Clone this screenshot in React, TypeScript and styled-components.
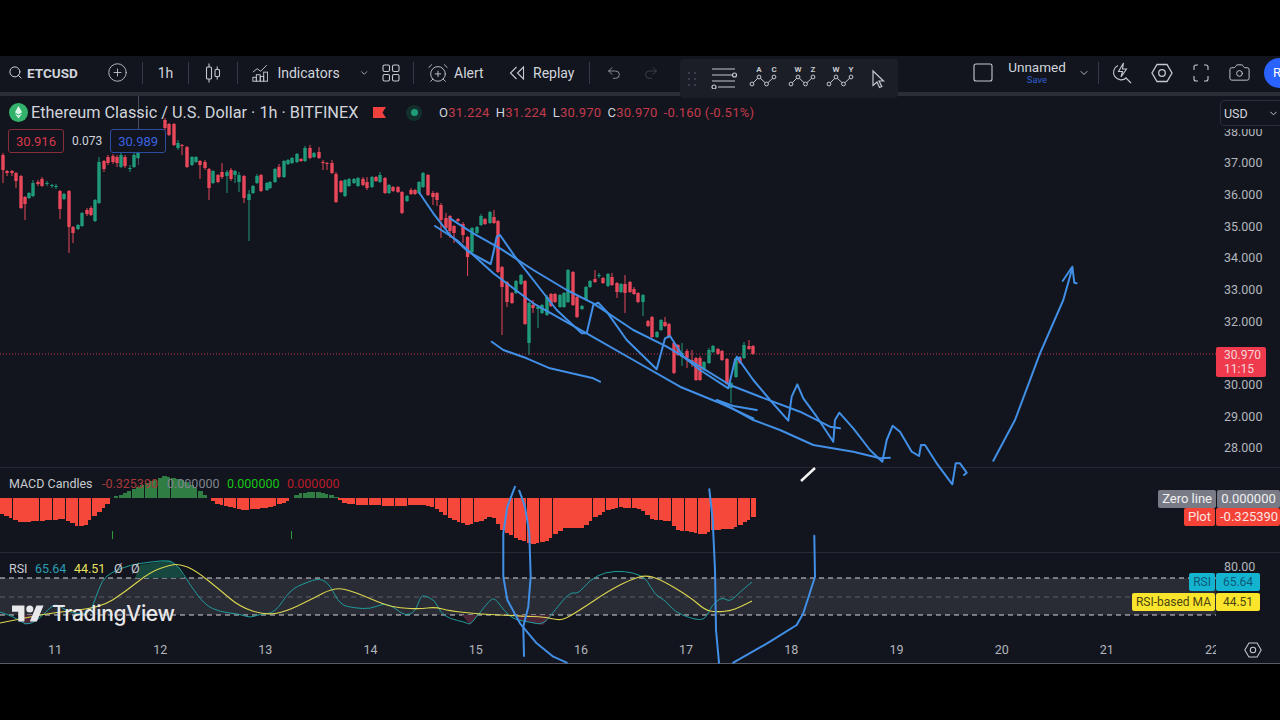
import React from "react";
import styled, { createGlobalStyle } from "styled-components";
import { AlarmClockPlus, Camera, ChevronDown, CirclePlus, Redo2, Search, Undo2 } from "lucide-react";

const GlobalStyle = createGlobalStyle`
  html, body {
    margin: 0;
    height: 100%;
    background: #000;
    overflow: hidden;
    font-family: Roboto, "Liberation Sans", sans-serif;
  }
  * { box-sizing: border-box; }
`;

const BG = "#12151d";
const GREEN = "#1f9b7c";
const RED = "#e8485a";
const BLUE = "#418fe6";

type Pt = [number, number];

const Frame = styled.div`
  width: 1280px;
  height: 720px;
  display: flex;
  flex-direction: column;
  background: #000;
  overflow: hidden;
`;
const Letterbox = styled.div`
  height: 56px;
  flex: none;
`;
const Toolbar = styled.header`
  position: relative;
  height: 36px;
  padding-bottom: 3px;
  flex: none;
  display: flex;
  align-items: center;
  background: ${BG};
  color: #d1d4dc;
  font-size: 14px;
`;
const Symbol = styled.div`
  width: 92px;
  padding-left: 8px;
  display: flex;
  align-items: center;
  gap: 4px;
  font-weight: 700;
  font-size: 13.5px;
`;
const Cell = styled.div<{ $w: number }>`
  width: ${({ $w }) => $w}px;
  flex: none;
  display: flex;
  align-items: center;
  justify-content: center;
`;
const LabelCell = styled.div<{ $w: number; $pad: number; $gap: number }>`
  width: ${({ $w }) => $w}px;
  padding-left: ${({ $pad }) => $pad}px;
  flex: none;
  display: flex;
  align-items: center;
  gap: ${({ $gap }) => $gap}px;
`;
const Sep = styled.div`
  width: 1px;
  height: 22px;
  flex: none;
  background: #363a45;
`;
const RightGroup = styled.div`
  margin-left: auto;
  margin-right: -14px;
  flex: none;
  display: flex;
  align-items: center;
`;
const NameBlock = styled.div`
  width: 74px;
  display: flex;
  flex-direction: column;
  align-items: center;
  line-height: 14px;
  font-size: 13.5px;
`;
const SaveText = styled.span`
  margin-top: 1px;
  color: #2f5fd0;
  font-size: 9.5px;
  line-height: 10px;
`;
const Avatar = styled.div`
  width: 30px;
  height: 30px;
  margin-left: 5px;
  padding-left: 9px;
  border-radius: 50%;
  background: #2962ff;
  color: #fff;
  font-size: 13px;
  line-height: 30px;
`;
const Palette = styled.div`
  position: absolute;
  z-index: 3;
  left: 680px;
  top: 3px;
  width: 218px;
  height: 39px;
  padding: 4px 0 0 8px;
  display: flex;
  align-items: flex-start;
  background: #1b1e27;
  border-radius: 4px;
`;
const DragHandle = styled.div`
  width: 8px;
  height: 14px;
  margin: 9px 14px 0 0;
  display: grid;
  grid-template-columns: 2px 2px;
  grid-auto-rows: 2px;
  gap: 4px;
  & > i { background: #3a3e49; }
`;
const PaletteTool = styled.div<{ $w: number }>`
  width: ${({ $w }) => $w}px;
  flex: none;
  display: flex;
  & > svg { display: block; }
`;
const Rule = styled.div`
  height: 4px;
  flex: none;
  background: #2b2e37;
`;
const Workspace = styled.main`
  position: relative;
  flex: none;
  display: flex;
  flex-direction: column;
  height: 568px;
  background: ${BG};
`;
const Pane = styled.section<{ $h: number; $open?: boolean }>`
  position: relative;
  height: ${({ $h }) => $h}px;
  flex: none;
  display: flex;
  border-bottom: ${({ $open }) => ($open ? "none" : "1px solid #262a34")};
`;
const Plot = styled.div`
  width: 1216px;
  flex: none;
  overflow: hidden;
  & > svg { display: block; }
`;
const PriceAxis = styled.div`
  flex: 1;
  padding: 19.6px 0 0 8px;
  color: #b2b5be;
  font-size: 12.5px;
`;
const AxisRow = styled.div`
  height: 31.7px;
  line-height: 31.7px;
`;
const AxisNote = styled.div`
  flex: 1;
  padding: 6px 0 0 8px;
  color: #b2b5be;
  font-size: 12.5px;
  line-height: 16px;
`;
const UsdBox = styled.div`
  position: absolute;
  top: 4px;
  left: 1220px;
  width: 70px;
  height: 26px;
  padding-left: 3px;
  display: flex;
  align-items: center;
  gap: 20px;
  background: ${BG};
  border: 1px solid #2a2e39;
  border-radius: 4px;
  box-shadow: 0 3px 0 ${BG};
  color: #d1d4dc;
  font-size: 12.5px;
`;
const LastPrice = styled.div`
  position: absolute;
  top: 251px;
  left: 1216px;
  width: 50px;
  height: 30px;
  padding: 1px 0 0 8px;
  background: #ee3a4c;
  border-radius: 2px;
  color: #f5d5d8;
  font-size: 12px;
  line-height: 14px;
`;
const Legend = styled.div`
  position: absolute;
  z-index: 1;
  top: 0;
  left: 0;
  display: flex;
  flex-direction: column;
`;
const TitleRow = styled.div`
  height: 33px;
  padding-left: 9px;
  display: flex;
  align-items: center;
`;
const ChartTitle = styled.span`
  margin-left: 3px;
  width: 342px;
  color: #d1d4dc;
  font-size: 16.3px;
  white-space: nowrap;
`;
const LiveDot = styled.span`
  width: 16px;
  height: 16px;
  margin: 0 17px 0 20px;
  border-radius: 50%;
  background: #12302c;
  display: flex;
  align-items: center;
  justify-content: center;
  &::after {
    content: "";
    width: 7px;
    height: 7px;
    border-radius: 50%;
    background: #1f9b7c;
  }
`;
const Ohlc = styled.div`
  display: flex;
  gap: 6px;
  font-size: 13px;
  letter-spacing: 0.25px;
  color: #c23a4c;
  white-space: nowrap;
  & b {
    font-weight: 400;
    color: #d1d4dc;
  }
`;
const QuoteRow = styled.div`
  padding-left: 8px;
  display: flex;
  align-items: center;
  gap: 8px;
  font-size: 13px;
`;
const QuoteBox = styled.div<{ $tone: string; $line: string }>`
  width: 56px;
  height: 24px;
  display: flex;
  align-items: center;
  justify-content: center;
  background: ${BG};
  color: ${({ $tone }) => $tone};
  border: 1px solid ${({ $line }) => $line};
  border-radius: 3px;
`;
const Spread = styled.span`
  color: #d1d4dc;
  font-size: 12px;
`;
const PaneLegend = styled.div<{ $top: number }>`
  position: absolute;
  z-index: 1;
  top: ${({ $top }) => $top}px;
  left: 9px;
  display: flex;
  align-items: center;
  font-size: 12.5px;
  color: #c8cad0;
  white-space: nowrap;
`;
const LegendValue = styled.span<{ $c: string; $w: number }>`
  color: ${({ $c }) => $c};
  width: ${({ $w }) => $w}px;
`;
const TagStack = styled.div<{ $top: number; $right: number; $gap: number }>`
  position: absolute;
  z-index: 1;
  top: ${({ $top }) => $top}px;
  right: ${({ $right }) => $right}px;
  display: flex;
  flex-direction: column;
  align-items: flex-end;
  gap: ${({ $gap }) => $gap}px;
`;
const TagRow = styled.div<{ $size: number }>`
  display: flex;
  gap: 1px;
  height: 18px;
  font-size: ${({ $size }) => $size}px;
  line-height: 18px;
`;
const Tag = styled.span<{ $bg: string; $c: string; $w?: number }>`
  background: ${({ $bg }) => $bg};
  color: ${({ $c }) => $c};
  ${({ $w }) => ($w ? `width: ${$w}px;` : "")}
  padding: 0 4px;
  border-radius: 2px;
  text-align: center;
  white-space: nowrap;
  overflow: hidden;
`;
const Watermark = styled.div`
  position: absolute;
  z-index: 1;
  left: 12px;
  top: 48px;
  display: flex;
  align-items: center;
  gap: 8px;
  color: #e8e8ea;
  font-family: Inter, Roboto, sans-serif;
  font-size: 21px;
  font-weight: 500;
  letter-spacing: -0.3px;
`;
const TimeAxis = styled.footer`
  height: 30px;
  padding-top: 1px;
  flex: none;
  display: flex;
  align-items: center;
  border-bottom: 1px solid #5a5d66;
`;
const TimeTrack = styled.div`
  width: 1216px;
  flex: none;
  overflow: hidden;
  padding-left: 2.4px;
  display: grid;
  grid-template-columns: repeat(12, 105.2px);
  color: #b2b5be;
  font-size: 12.5px;
  text-align: center;
`;
const AxisSettings = styled.div`
  flex: 1;
  display: flex;
  justify-content: center;
  padding: 2px 0 0 10px;
`;
const Strokes = styled.svg`
  position: absolute;
  z-index: 2;
  top: 0;
  left: 0;
  pointer-events: none;
`;

// tool icons
const iconProps = { fill: "none", stroke: "#c5c8cf", strokeWidth: 1.1 } as const;
const CandleIcon = () => (
  <svg width="16" height="20" viewBox="0 0 16 20" {...iconProps}>
    <rect x="1.5" y="4" width="5" height="12" rx="1" />
    <path d="M4 0.5V4M4 16v3.5" />
    <rect x="10" y="6.5" width="4.5" height="7" rx="1" />
    <path d="M12.2 3.5v3M12.2 13.5v3" />
  </svg>
);
const IndicatorsIcon = () => (
  <svg width="19" height="20" viewBox="0 0 19 20" {...iconProps}>
    <path d="M1 9l5-4 4 3 7-7" />
    <rect x="1" y="15" width="4" height="4.5" />
    <rect x="5" y="12" width="4.5" height="7.5" />
    <rect x="9.5" y="14" width="4" height="5.5" />
    <rect x="13.5" y="9" width="4.5" height="10.5" />
  </svg>
);
const GridIcon = () => (
  <svg width="18" height="18" viewBox="0 0 18 18" {...iconProps}>
    <rect x="1" y="1" width="6.5" height="6.5" rx="1.5" />
    <rect x="10.5" y="1" width="6.5" height="6.5" rx="1.5" />
    <rect x="1" y="10.5" width="6.5" height="6.5" rx="1.5" />
    <rect x="10.5" y="10.5" width="6.5" height="6.5" rx="1.5" />
  </svg>
);
const ReplayIcon = () => (
  <svg width="16" height="14" viewBox="0 0 16 14" {...iconProps}>
    <path d="M7.5 1L1.5 7l6 6M14.5 1l-6 6 6 6V1z" />
  </svg>
);
const SquareIcon = () => (
  <svg width="20" height="19" viewBox="0 0 20 19" {...iconProps}>
    <rect x="1" y="1" width="18" height="17" rx="2" />
  </svg>
);
const BoltLensIcon = () => (
  <svg width="20" height="22" viewBox="0 0 20 22" {...iconProps}>
    <path d="M6 3.5a7.5 7.5 0 1 0 8.5 12M14 16l5 5" />
    <path d="M11.5 1L6.5 9.5h4L9 15l5.5-8h-4z" />
  </svg>
);
const HexIcon = ({ size = 22 }: { size?: number }) => (
  <svg width={size} height={size} viewBox="0 0 22 22" {...iconProps}>
    <path d="M6 2.5h10l5 8.5-5 8.5H6L1 11z" strokeWidth={1.3} />
    <circle cx="11" cy="11" r="3.3" strokeWidth={1.3} />
  </svg>
);
const FullscreenIcon = () => (
  <svg width="16" height="18" viewBox="0 0 16 18" {...iconProps}>
    <path d="M1 6V3a2 2 0 0 1 2-2h2M11 1h2a2 2 0 0 1 2 2v3M15 12v3a2 2 0 0 1-2 2h-2M5 17H3a2 2 0 0 1-2-2v-3" />
  </svg>
);
const LinesIcon = () => (
  <svg width="28" height="26" viewBox="0 0 28 26" fill="none" stroke="#c5c8cf" strokeWidth="1.1">
    <path d="M2 6h23M2 12h21M2 18h23M8 24h17" />
    <circle cx="24.5" cy="12" r="2" fill="#1b1e27" strokeWidth="1.2" />
    <circle cx="4" cy="24" r="2" fill="#1b1e27" strokeWidth="1.2" />
  </svg>
);
const WaveIcon = ({ left, right }: { left: string; right: string }) => (
  <svg width="28" height="26" viewBox="0 0 28 26" fill="none">
    <text x="10" y="8.5" fontSize="8" fontWeight="700" fill="#c5c8cf" textAnchor="middle" fontFamily="Roboto">{left}</text>
    <text x="25" y="8.5" fontSize="8" fontWeight="700" fill="#c5c8cf" textAnchor="middle" fontFamily="Roboto">{right}</text>
    <path d="M3 21l7-7 7.5 7 7.5-7" stroke="#c5c8cf" strokeWidth="1" />
    {([[3, 21], [10, 14], [17.5, 21], [25, 14]] as Pt[]).map(([x, y]) => (
      <circle key={x} cx={x} cy={y} r="1.9" fill="#1b1e27" stroke="#c5c8cf" strokeWidth="1" />
    ))}
  </svg>
);
const CursorIcon = () => (
  <svg width="14" height="26" viewBox="0 0 14 26" {...iconProps}>
    <path d="M2 8l10.5 10H8l2.8 5.5-2.3 1L6 19l-4 3.5z" strokeWidth={1.2} />
  </svg>
);
const CoinIcon = () => (
  <svg width="19" height="19" viewBox="0 0 19 19">
    <circle cx="9.5" cy="9.5" r="9.5" fill="#33b26b" />
    <path d="M9.5 3l3.6 6.3-3.6 2.2-3.6-2.2z" fill="#dff5e8" />
    <path d="M5.9 10.4l3.6 2.2 3.6-2.2-3.6 5.1z" fill="#dff5e8" />
  </svg>
);
const FlagIcon = () => (
  <svg width="13" height="11" viewBox="0 0 13 11" style={{ flex: "none" }}>
    <path d="M0 0h13l-3.5 5.5L13 11H0z" fill="#f0413f" />
  </svg>
);
const TvLogo = () => (
  <svg width="32" height="21" viewBox="0 2 36 22" fill="#e8e8ea">
    <path d="M14 22H7V11H0V4h14v18zM28 22h-8l7.5-18h8L28 22z" />
    <circle cx="20" cy="8" r="4" />
  </svg>
);

// data
const lerp = (keys: Pt[], x: number) => {
  if (x <= keys[0][0]) return keys[0][1];
  for (let i = 1; i < keys.length; i++) {
    if (x <= keys[i][0]) {
      const [x0, y0] = keys[i - 1];
      const [x1, y1] = keys[i];
      return y0 + ((y1 - y0) * (x - x0)) / (x1 - x0);
    }
  }
  return keys[keys.length - 1][1];
};

// x, body top, body bottom, up?, high, low (pixels, read off the zoomed crops)
type Candle = [number, number, number, 0 | 1, number?, number?];
const candles: Candle[] = [
  [3, 155, 170, 0, 153, 183], [7, 171, 173, 0, 170, 176], [12, 171, 173, 0, 170, 176], [16, 173, 181, 0, 172, 188],
  [21, 176, 208, 0, 175, 209], [25, 197, 204, 0, 196, 220], [29, 193, 198, 1], [33, 183, 196, 1, 180, 197],
  [38, 182, 184, 0, 180, 186], [42, 179, 186, 0, 177, 187], [47, 183, 184, 1, 181, 186], [52, 185, 186, 1, 184, 188],
  [56, 186, 187, 1, 184, 189], [60, 191, 209, 0, 190, 219], [64, 194, 199, 1], [69, 191, 227, 0, 190, 253],
  [73, 227, 233, 0, 226, 243], [78, 225, 229, 1], [82, 213, 226, 1], [87, 210, 214, 0, 208, 216], [91, 208, 215, 0, 206, 216],
  [95, 200, 221, 1], [99, 162, 203, 1, 157, 204], [104, 161, 169, 0, 160, 172], [108, 157, 163, 0, 155, 165],
  [113, 156, 162, 0, 154, 164], [117, 157, 163, 0, 155, 167], [121, 155, 167, 1, 152, 168], [125, 157, 166, 0, 155, 168],
  [130, 168, 169, 1, 165, 172], [134, 155, 167, 1, 152, 168], [138, 150, 158, 1], [165, 120, 128, 0, 118, 130],
  [169, 124, 135, 0], [174, 124, 145, 0], [178, 143, 148, 1, 140, 150], [182, 145, 146, 0, 144, 155], [187, 147, 167, 0],
  [192, 157, 165, 1], [196, 157, 162, 1], [200, 161, 165, 0, 160, 179], [205, 162, 168, 0, 160, 170], [209, 169, 188, 0, 168, 200],
  [213, 171, 183, 1], [218, 175, 182, 0], [222, 172, 177, 0, 163, 179], [227, 172, 176, 1, 170, 193], [231, 170, 179, 0, 168, 181],
  [235, 171, 175, 1, 170, 183], [239, 175, 182, 1, 172, 192], [244, 176, 198, 0, 175, 203], [249, 194, 200, 1, 190, 241],
  [253, 186, 193, 1], [257, 176, 183, 1, 174, 184], [261, 175, 191, 0], [267, 183, 190, 1], [270, 182, 188, 1],
  [275, 169, 182, 1], [279, 167, 177, 0, 164, 178], [284, 161, 177, 1], [288, 160, 164, 1], [292, 158, 163, 1],
  [297, 154, 162, 1], [301, 159, 161, 0], [305, 148, 161, 1, 146, 162], [310, 148, 158, 0, 145, 159], [314, 153, 157, 1],
  [319, 152, 158, 0, 147, 159], [323, 162, 163, 0, 160, 170], [327, 163, 164, 0, 162, 170], [332, 163, 173, 0, 160, 174],
  [336, 174, 202, 0, 172, 203], [341, 181, 192, 0], [345, 180, 196, 1, 179, 197], [349, 179, 186, 1], [354, 179, 183, 1],
  [358, 178, 186, 1], [363, 179, 185, 0, 177, 186], [367, 182, 188, 0, 177, 190], [372, 177, 187, 1, 176, 188],
  [376, 177, 181, 0], [380, 175, 182, 1, 172, 183], [385, 178, 193, 0], [389, 185, 193, 1], [393, 187, 191, 0],
  [398, 187, 192, 0, 186, 193], [402, 192, 213, 0], [407, 196, 201, 1], [411, 190, 194, 0, 188, 195], [415, 190, 194, 0],
  [419, 182, 193, 1], [423, 173, 187, 1], [428, 175, 195, 0], [433, 193, 197, 0, 191, 205], [437, 193, 200, 0, 192, 206],
  [441, 205, 220, 0, 203, 238], [446, 218, 228, 0, 213, 230], [450, 216, 231, 0, 215, 238], [454, 226, 233, 0, 225, 243],
  [458, 219, 221, 0], [463, 224, 235, 0, 222, 243], [467.6, 237, 257, 0, 236, 276], [472, 228, 252, 1, 227, 253],
  [477, 227, 233, 1], [481, 216, 225, 1, 214, 226], [485, 219, 224, 0], [490, 212, 223, 1], [494, 217, 223, 0, 210, 224],
  [498, 221, 272, 0], [502, 267, 287, 0, 266, 335], [507, 282, 302, 0, 281, 307], [512, 293, 303, 0], [516, 281, 293, 1],
  [521, 275, 284, 1], [525, 281, 324, 0], [529, 303, 343, 1, 302, 355], [533, 305, 308, 0, 300, 313], [538, 307, 309, 1, 306, 328],
  [542, 305, 313, 1], [547, 297, 315, 1, 295, 316], [551, 294, 306, 0], [555, 294, 302, 0], [560, 295, 307, 1], [564, 293, 307, 1],
  [568, 270, 302, 1], [573, 272, 305, 0], [577, 297, 317, 0], [582, 306, 309, 1], [586, 287, 300, 1], [590, 281, 287, 1],
  [595, 279, 282, 0, 270, 283], [599, 275, 276, 1, 273, 278], [603, 278, 283, 0], [608, 274, 286, 1], [612, 277, 285, 0, 273, 286],
  [617, 283, 292, 0, 282, 298], [621, 284, 292, 1], [625, 284, 293, 0, 275, 313], [630, 282, 292, 0], [634, 289, 294, 0, 287, 295],
  [638, 293, 302, 0], [643, 295, 302, 1, 294, 316], [648, 321, 326, 0], [652, 317, 337, 0], [657, 332, 337, 1], [661, 320, 330, 1],
  [665, 322, 326, 0, 317, 327], [669, 324, 337, 0], [674, 343, 373, 0], [678, 345, 355, 0], [682, 353, 357, 1, 343, 366],
  [687, 351, 358, 0, 349, 368], [692, 360, 363, 0, 350, 367], [696, 358, 380, 0], [700, 358, 380, 0, 356, 381], [704, 362, 370, 1],
  [709, 350, 363, 1, 348, 364], [713, 346, 352, 1], [718, 349, 354, 0], [722, 351, 360, 0], [727, 359, 384, 0], [731, 383, 388, 1, 382, 403],
  [736, 358, 377, 1], [740, 358, 363, 0], [744, 345, 358, 1, 342, 359], [749, 346, 349, 0, 340, 350], [753, 346, 354, 0],
];

const macdKeys: Pt[] = [
  [0, 15], [20, 24], [25, 24], [50, 22], [65, 21], [78, 29], [85, 27], [97, 15], [108, 5], [112, 0],
  [120, -3], [130, -7], [150, -16], [165, -22], [185, -17], [195, -10], [207, -1], [210, 2], [220, 7], [235, 10],
  [245, 12], [265, 10], [280, 6], [290, 2], [293, -2], [300, -5], [315, -6], [330, -4], [337, 0], [345, 5],
  [360, 7], [400, 8], [420, 7], [430, 8], [440, 13], [450, 20], [467, 27], [480, 23], [492, 18], [503, 33],
  [520, 42], [533, 46], [547, 43], [563, 30], [583, 30], [593, 20], [610, 11], [620, 9], [640, 11], [653, 22],
  [670, 23], [677, 32], [687, 33], [703, 37], [713, 32], [730, 31], [743, 25], [754, 18],
];
const macdBars = Array.from({ length: 172 }, (_, i) => {
  const x = i * 4.39;
  return { x, i, v: Math.round(lerp(macdKeys, x + 2)) };
});

const rsiLine: Pt[] = [
  [0, 612], [15, 617], [25, 625], [35, 622], [45, 613], [55, 603], [65, 610], [80, 615], [90, 612], [95, 600],
  [102, 580], [112, 572], [130, 565], [150, 562], [170, 560], [180, 568], [190, 585], [205, 605], [220, 612], [240, 614],
  [250, 618], [260, 614], [275, 613], [290, 590], [305, 583], [320, 578], [330, 585], [340, 605], [355, 608], [370, 609],
  [385, 603], [395, 608], [405, 616], [415, 612], [420, 598], [423, 595], [435, 600], [440, 612], [450, 619], [465, 622],
  [470, 625], [478, 615], [490, 600], [495, 598], [505, 612], [515, 620], [530, 622], [543, 625], [555, 610], [570, 592],
  [578, 594], [590, 580], [605, 572], [625, 571], [640, 575], [647, 580], [655, 595], [665, 600], [675, 612], [690, 618],
  [700, 620], [706, 618], [712, 605], [722, 597], [730, 602], [740, 592], [752, 582],
];
const maLine: Pt[] = [
  [0, 623], [15, 620], [50, 613], [100, 608], [125, 592], [150, 572], [170, 565], [180, 564], [195, 570], [220, 590],
  [240, 607], [265, 615], [285, 612], [310, 600], [335, 587], [355, 592], [385, 605], [400, 608], [420, 609], [435, 607],
  [450, 611], [480, 614], [520, 616], [545, 617], [557, 620], [565, 619], [580, 610], [610, 590], [630, 580], [645, 575],
  [660, 579], [690, 597], [705, 610], [715, 612], [730, 611], [740, 607], [752, 601],
];

const smooth = (pts: Pt[]) => {
  let d = `M${pts[0][0]} ${pts[0][1]}`;
  for (let i = 1; i < pts.length - 1; i++) {
    const mx = (pts[i][0] + pts[i + 1][0]) / 2;
    const my = (pts[i][1] + pts[i + 1][1]) / 2;
    d += ` Q${pts[i][0]} ${pts[i][1]} ${mx} ${my}`;
  }
  const last = pts[pts.length - 1];
  return `${d} L${last[0]} ${last[1]}`;
};

// pen strokes, read off the zoomed crops
const from = (ox: number, oy: number, pts: Pt[]) =>
  pts.map(([x, y]) => `${(ox + x / 3).toFixed(1)},${(oy + y / 3).toFixed(1)}`).join(" ");

const penLines = [
  from(400, 170, [[58, 68], [100, 130], [150, 195], [205, 245], [272, 282], [282, 240], [290, 200], [300, 195], [345, 260], [400, 330], [470, 420], [545, 490], [560, 490], [580, 405], [595, 398], [620, 425], [680, 510], [770, 598], [795, 505], [810, 498], [850, 560], [900, 600], [985, 655], [1005, 570], [1020, 562]]),
  from(720, 250, [[50, 320], [100, 390], [150, 450], [205, 512], [215, 440], [232, 403], [250, 445], [290, 500], [340, 575], [345, 510], [358, 488], [400, 535], [450, 600], [487, 635], [500, 570], [518, 527], [540, 545], [575, 605], [597, 618], [603, 585], [615, 585], [650, 640], [697, 703], [707, 640], [720, 640], [740, 668], [732, 675]]),
  from(400, 170, [[150, 145], [220, 190], [300, 235], [400, 300], [500, 360], [580, 400], [700, 480], [800, 530], [900, 590], [990, 645], [1080, 680], [1200, 725], [1290, 770], [1320, 775]]),
  from(400, 170, [[105, 168], [170, 210], [280, 310], [400, 400], [560, 490], [700, 570], [840, 650], [950, 695], [1060, 745]]),
  from(720, 250, [[0, 455], [100, 510], [180, 540], [280, 585], [400, 605], [480, 625], [510, 623]]),
  from(400, 170, [[950, 690], [1000, 708], [1070, 720]]),
  from(400, 170, [[275, 515], [310, 540], [380, 565], [450, 595], [580, 625], [600, 635]]),
  from(720, 250, [[820, 632], [885, 510], [960, 310], [1030, 150], [1057, 55]]),
  from(720, 250, [[1028, 93], [1057, 50], [1063, 98], [1070, 100]]),
  from(420, 470, [[285, 50], [262, 110], [250, 190], [250, 320], [262, 390], [300, 460], [350, 520], [400, 560], [440, 578]]),
  from(420, 470, [[298, 62], [315, 110], [328, 190], [332, 320], [325, 410], [310, 470], [312, 558]]),
  from(420, 470, [[868, 58], [878, 150], [885, 300], [888, 480], [897, 578]]),
  from(420, 470, [[1183, 197], [1185, 320], [1150, 430], [1130, 465], [1050, 515], [940, 578]]),
];

const priceLabels = ["38.000", "37.000", "36.000", "35.000", "34.000", "33.000", "32.000", "", "30.000", "29.000", "28.000"];
const days = ["11", "12", "13", "14", "15", "16", "17", "18", "19", "20", "21", "22"];

export default function App() {
  return (
    <Frame>
      <GlobalStyle />
      <Letterbox />
      <Toolbar>
        <Symbol>
          <Search size={15} strokeWidth={1.6} color="#d1d4dc" />
          ETCUSD
        </Symbol>
        <Cell $w={50}><CirclePlus size={21} strokeWidth={1} color="#c5c8cf" /></Cell>
        <Sep />
        <Cell $w={45}>1h</Cell>
        <Sep />
        <Cell $w={48}><CandleIcon /></Cell>
        <Sep />
        <LabelCell $w={131} $pad={14} $gap={9}>
          <IndicatorsIcon />
          Indicators
          <ChevronDown size={12} color="#b2b5be" style={{ marginLeft: 10 }} />
        </LabelCell>
        <Cell $w={44}><GridIcon /></Cell>
        <Sep />
        <LabelCell $w={86} $pad={13} $gap={5}>
          <AlarmClockPlus size={22} strokeWidth={1} color="#c5c8cf" />
          Alert
        </LabelCell>
        <LabelCell $w={89} $pad={9} $gap={8}>
          <ReplayIcon />
          Replay
        </LabelCell>
        <Sep />
        <Cell $w={47}><Undo2 size={16} strokeWidth={1.1} color="#b2b5be" /></Cell>
        <Cell $w={28}><Redo2 size={16} strokeWidth={1.1} color="#4a4e59" /></Cell>
        <Palette>
          <DragHandle>{[0, 1, 2, 3, 4, 5].map((d) => <i key={d} />)}</DragHandle>
          <PaletteTool $w={39}><LinesIcon /></PaletteTool>
          <PaletteTool $w={39}><WaveIcon left="A" right="C" /></PaletteTool>
          <PaletteTool $w={38}><WaveIcon left="W" right="Z" /></PaletteTool>
          <PaletteTool $w={45}><WaveIcon left="W" right="Y" /></PaletteTool>
          <PaletteTool $w={14}><CursorIcon /></PaletteTool>
        </Palette>
        <RightGroup>
          <Cell $w={35}><SquareIcon /></Cell>
          <NameBlock>
            Unnamed
            <SaveText>Save</SaveText>
          </NameBlock>
          <Cell $w={20}><ChevronDown size={12} color="#b2b5be" /></Cell>
          <Cell $w={8}><Sep /></Cell>
          <Cell $w={40}><BoltLensIcon /></Cell>
          <Cell $w={40}><HexIcon /></Cell>
          <Cell $w={38}><FullscreenIcon /></Cell>
          <Cell $w={39}><Camera size={23} strokeWidth={1} color="#c5c8cf" /></Cell>
          <Avatar>R</Avatar>
        </RightGroup>
      </Toolbar>
      <Rule />
      <Workspace>
        <Pane $h={372}>
          <Plot>
            <svg width="1216" height="371" viewBox="0 96 1216 371">
              <line x1="138.5" y1="96" x2="138.5" y2="165" stroke="#4a4e59" />
              {candles.map(([x, top, bottom, up, high, low]) => {
                const color = up ? GREEN : RED;
                return (
                  <g key={x}>
                    <line x1={x} x2={x} y1={high ?? top - 1} y2={low ?? bottom + 1} stroke={color} strokeWidth="1" />
                    <rect x={x - 1.7} y={top} width="3.4" height={bottom - top} fill={color} />
                  </g>
                );
              })}
              <line x1="0" x2="1216" y1="354" y2="354" stroke="#b8384f" strokeWidth="1" strokeDasharray="1 2" />
            </svg>
          </Plot>
          <PriceAxis>
            {priceLabels.map((p, i) => <AxisRow key={i}>{p}</AxisRow>)}
          </PriceAxis>
          <UsdBox>
            USD
            <ChevronDown size={11} />
          </UsdBox>
          <LastPrice>30.970<br />11:15</LastPrice>
          <Legend>
            <TitleRow>
              <CoinIcon />
              <ChartTitle>Ethereum Classic / U.S. Dollar · 1h · BITFINEX</ChartTitle>
              <FlagIcon />
              <LiveDot />
              <Ohlc>
                <span><b>O</b>31.224</span>
                <span><b>H</b>31.224</span>
                <span><b>L</b>30.970</span>
                <span><b>C</b>30.970</span>
                <span>-0.160 (-0.51%)</span>
              </Ohlc>
            </TitleRow>
            <QuoteRow>
              <QuoteBox $tone="#d8394c" $line="#8a2d3a">30.916</QuoteBox>
              <Spread>0.073</Spread>
              <QuoteBox $tone="#3a62e0" $line="#2c4ea0">30.989</QuoteBox>
            </QuoteRow>
          </Legend>
        </Pane>
        <Pane $h={85}>
          <Plot>
            <svg width="1216" height="84" viewBox="0 468 1216 84" shapeRendering="crispEdges">
              {macdBars.map((b) =>
                b.x > 752 ? null : (
                  <rect
                    key={b.i}
                    x={b.x}
                    y={b.v > 0 ? 498 : 498 + b.v}
                    width={b.i % 3 === 2 ? 3.6 : 5}
                    height={Math.abs(b.v)}
                    fill={b.v > 0 ? "#f5483a" : "#2f7d42"}
                  />
                )
              )}
              <rect x="112" y="531" width="1.2" height="8" fill="#2a9a3a" />
              <rect x="291" y="531" width="1.2" height="8" fill="#2a9a3a" />
            </svg>
          </Plot>
          <AxisNote />
          <PaneLegend $top={8}>
            <LegendValue $c="#c8cad0" $w={93}>MACD Candles</LegendValue>
            <LegendValue $c="#a83a3a" $w={65}>-0.325390</LegendValue>
            <LegendValue $c="#808590" $w={60}>0.000000</LegendValue>
            <LegendValue $c="#18c418" $w={60}>0.000000</LegendValue>
            <LegendValue $c="#b81c2c" $w={60}>0.000000</LegendValue>
          </PaneLegend>
          <TagStack $top={22} $right={0} $gap={0}>
            <TagRow $size={13}>
              <Tag $bg="#787b86" $c="#f0f0f0">Zero line</Tag>
              <Tag $bg="#787b86" $c="#f0f0f0" $w={63}>0.000000</Tag>
            </TagRow>
            <TagRow $size={13}>
              <Tag $bg="#f44336" $c="#fbe4e2">Plot</Tag>
              <Tag $bg="#f44336" $c="#fbe4e2" $w={64}>-0.325390</Tag>
            </TagRow>
          </TagStack>
        </Pane>
        <Pane $h={81} $open>
          <Plot>
            <svg width="1216" height="81" viewBox="0 553 1216 81">
              <rect x="0" y="578" width="1216" height="37" fill="#292b35" />
              <line x1="0" x2="1216" y1="578" y2="578" stroke="#d8d8dc" strokeDasharray="5 4" />
              <line x1="0" x2="1216" y1="597" y2="597" stroke="#5c5e68" strokeDasharray="5 4" />
              <line x1="0" x2="1216" y1="615" y2="615" stroke="#d8d8dc" strokeDasharray="5 4" />
              <polygon points="135,578 140,565 170,560 180,568 184,578" fill="#17483f" />
              <polygon points="18,615 25,625 35,622 40,615" fill="#4a2638" />
              <polygon points="462,615 470,625 478,615" fill="#4a2638" />
              <polygon points="515,615 520,621 543,625 552,615" fill="#4a2638" />
              <path d={smooth(rsiLine)} fill="none" stroke="#1f9c9c" strokeWidth="1" />
              <path d={smooth(maLine)} fill="none" stroke="#dcd64f" strokeWidth="1.1" />
            </svg>
          </Plot>
          <AxisNote>80.00</AxisNote>
          <PaneLegend $top={8}>
            <LegendValue $c="#c8cad0" $w={26}>RSI</LegendValue>
            <LegendValue $c="#2a9db5" $w={39}>65.64</LegendValue>
            <LegendValue $c="#e8e060" $w={40}>44.51</LegendValue>
            <LegendValue $c="#c8cad0" $w={17}>Ø</LegendValue>
            <LegendValue $c="#c8cad0" $w={12}>Ø</LegendValue>
          </PaneLegend>
          <TagStack $top={20} $right={20} $gap={2}>
            <TagRow $size={12}>
              <Tag $bg="#14b4d0" $c="#0b5a78">RSI</Tag>
              <Tag $bg="#14b4d0" $c="#0b5a78" $w={44}>65.64</Tag>
            </TagRow>
            <TagRow $size={12}>
              <Tag $bg="#fbe52c" $c="#4a4412">RSI-based MA</Tag>
              <Tag $bg="#fbe52c" $c="#4a4412" $w={44}>44.51</Tag>
            </TagRow>
          </TagStack>
          <Watermark>
            <TvLogo />
            TradingView
          </Watermark>
        </Pane>
        <TimeAxis>
          <TimeTrack>
            {days.map((d) => <span key={d}>{d}</span>)}
          </TimeTrack>
          <AxisSettings><HexIcon size={18} /></AxisSettings>
        </TimeAxis>
        <Strokes width="1280" height="568" viewBox="0 96 1280 568">
          {penLines.map((points) => (
            <polyline
              key={points}
              points={points}
              fill="none"
              stroke={BLUE}
              strokeWidth="2"
              strokeLinejoin="round"
              strokeLinecap="round"
            />
          ))}
          <line x1="801" y1="481" x2="815" y2="468" stroke="#f4f4f4" strokeWidth="2.4" />
        </Strokes>
      </Workspace>
    </Frame>
  );
}
